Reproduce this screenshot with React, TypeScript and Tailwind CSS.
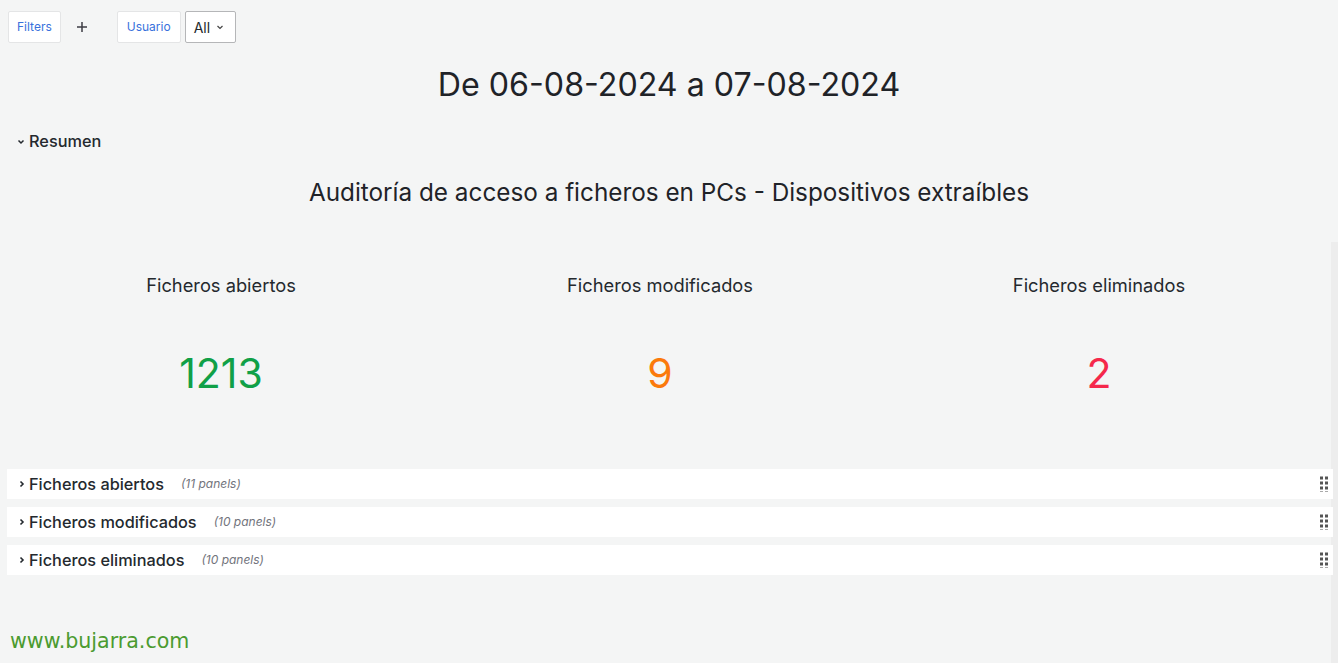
import React from "react";

const Grip = () => (
  <svg width="10" height="16" viewBox="0 0 10 16" className="shrink-0">
    {[0, 1, 2, 3].map((r) =>
      [0, 1].map((c) => (
        <rect key={`${r}-${c}`} x={c * 5 + 1} y={r * 5 + 0.5} width="3" height="3" fill="#555" />
      ))
    )}
  </svg>
);

const Row = ({ title, count }: { title: string; count: string }) => (
  <div className="relative flex h-[30px] items-center bg-white pl-[10px] pr-[4px]">
    <svg width="10" height="10" viewBox="0 0 10 10" className="mr-[2px]">
      <path d="M3.5 2.5 L6 5 L3.5 7.5" stroke="#24292e" strokeWidth="1.6" fill="none" />
    </svg>
    <span className="text-[16.3px] font-medium text-[#24292e]">{title}</span>
    <span className="ml-[17px] text-[12px] italic text-[#72747c]">{count}</span>
    <div className="flex-1" />
    <Grip />
  </div>
);

export default function App() {
  return (
    <div
      className="relative h-[663px] w-[1338px] overflow-hidden bg-[#f4f5f5] text-[#24292e]"
      style={{ fontFamily: "Inter, 'Noto Sans', sans-serif" }}
    >
      <div className="absolute right-0 top-[242px] h-[421px] w-[7px] bg-[#ededed]" />
      <div className="flex items-center pl-[8px] pt-[11px]">
        <div className="flex h-[32px] items-center rounded-[2px] border border-[#e4e5e6] bg-white px-[8px] text-[12px] text-[#3871dc]">
          Filters
        </div>
        <div className="ml-[14px] flex h-[32px] w-[14px] items-center justify-center">
          <svg width="12" height="12" viewBox="0 0 12 12">
            <path d="M6 1 V11 M1 6 H11" stroke="#3d3d44" strokeWidth="1.5" />
          </svg>
        </div>
        <div className="ml-[28px] flex h-[32px] items-center rounded-[2px] border border-[#e4e5e6] bg-white px-[9px] text-[12px] text-[#3871dc]">
          Usuario
        </div>
        <div className="ml-[4px] flex h-[32px] w-[51px] items-center rounded-[2px] border border-[#b5b6b8] bg-white pl-[8px] text-[14px] text-[#24292e]">
          All
          <svg width="8" height="8" viewBox="0 0 8 8" className="ml-[6px]">
            <path d="M1.5 3 L4 5.5 L6.5 3" stroke="#444" strokeWidth="1.2" fill="none" />
          </svg>
        </div>
      </div>

      <div className="mt-[22px] text-center text-[32.2px] leading-[40px] text-[#1f2328]">
        De 06-08-2024 a 07-08-2024
      </div>

      <div className="mt-[26px] flex items-center pl-[16px]">
        <svg width="10" height="10" viewBox="0 0 10 10" className="mr-[3px] mt-[2px]">
          <path d="M2.5 3.5 L5 6 L7.5 3.5" stroke="#24292e" strokeWidth="1.5" fill="none" />
        </svg>
        <span className="text-[16.3px] font-medium leading-[20px]">Resumen</span>
      </div>

      <div className="mt-[26px] text-center text-[24.3px] leading-[30px] text-[#1f2328]">
        Auditoría de acceso a ficheros en PCs - Dispositivos extraíbles
      </div>

      <div className="mt-[66px] grid grid-cols-[426px_426px_426px] gap-x-[13px] pl-[8px]">
        {[
          { label: "Ficheros abiertos", value: "1213", color: "text-[#10a047]" },
          { label: "Ficheros modificados", value: "9", color: "text-[#fb7a0c]" },
          { label: "Ficheros eliminados", value: "2", color: "text-[#f5284b]" },
        ].map((s) => (
          <div key={s.label} className="flex flex-col items-center">
            <div className="text-[18.3px] leading-[24px] text-[#24292e]">{s.label}</div>
            <div className={`mt-[50px] text-[41px] leading-[52px] ${s.color}`}>{s.value}</div>
          </div>
        ))}
      </div>

      <div className="mt-[70px] flex flex-col gap-[8px] pl-[7px] pr-[5px]">
        <Row title="Ficheros abiertos" count="(11 panels)" />
        <Row title="Ficheros modificados" count="(10 panels)" />
        <Row title="Ficheros eliminados" count="(10 panels)" />
      </div>

      <div
        className="absolute bottom-[6px] left-[10px] text-[20.6px] text-[#4b9b30]"
        style={{ fontFamily: "'DejaVu Sans', Verdana, sans-serif" }}
      >
        www.bujarra.com
      </div>
    </div>
  );
}
